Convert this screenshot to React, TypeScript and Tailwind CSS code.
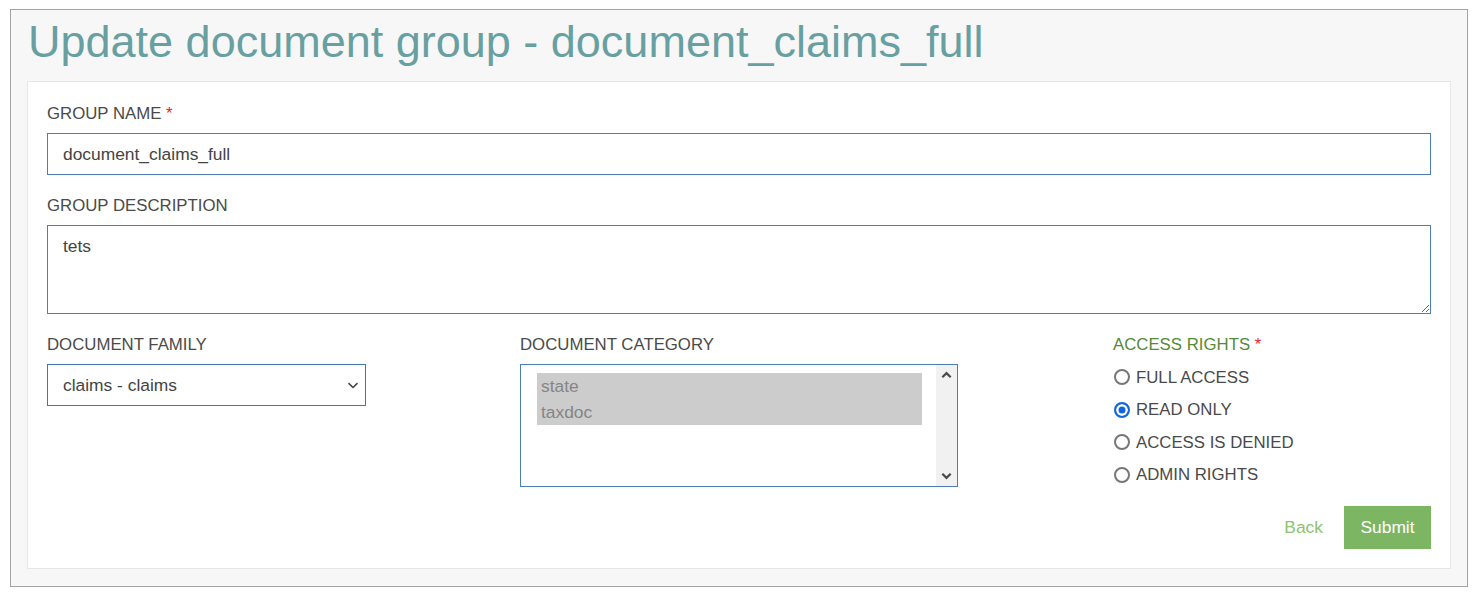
import React, { useState } from "react";

const font = { fontFamily: '"Liberation Sans", Arial, sans-serif' };

const rights = ["FULL ACCESS", "READ ONLY", "ACCESS IS DENIED", "ADMIN RIGHTS"];

function FieldLabel({
  children,
  required,
  className = "",
}: {
  children: React.ReactNode;
  required?: boolean;
  className?: string;
}) {
  return (
    <div className={`h-5 leading-5 text-[16.8px] ${className}`}>
      {children}
      {required && <span className="text-[#e2232a]"> *</span>}
    </div>
  );
}

export default function App() {
  const [name, setName] = useState("document_claims_full");
  const [desc, setDesc] = useState("tets");
  const [access, setAccess] = useState("READ ONLY");

  return (
    <div className="w-[1477px] h-[594px] bg-white pt-[9px] pl-[10px] pr-[9px]" style={font}>
      <div className="h-[578px] border border-[#a3a3a3] bg-[#f7f7f7] px-4 pt-[7px]">
        <h1 className="h-[50px] leading-[50px] text-[45px] text-[#68a0a2] pl-[1px]">
          Update document group - document_claims_full
        </h1>
        <div className="mt-[14px] h-[488px] border border-[#e6e6e6] bg-white px-[19px] pt-[22px] text-[#4a4a4a]">
          <FieldLabel required>GROUP NAME</FieldLabel>
          <input
            value={name}
            onChange={(e) => setName(e.target.value)}
            className="mt-[9px] block w-full h-[42px] border border-[#4a7fb0] px-[15px] text-[17.4px] text-[#444] outline-none"
            style={font}
          />

          <FieldLabel className="mt-[21px]">GROUP DESCRIPTION</FieldLabel>
          <textarea
            value={desc}
            onChange={(e) => setDesc(e.target.value)}
            className="mt-[9px] block w-full h-[89px] border border-[#4a7fb0] px-[15px] pt-[7px] text-[17.4px] text-[#444] outline-none"
            style={font}
          />

          <div className="mt-[21px] flex">
            <div className="w-[473px]">
              <FieldLabel>DOCUMENT FAMILY</FieldLabel>
              <div className="relative mt-[9px] w-[319px] h-[42px]">
                <select
                  defaultValue="claims"
                  className="appearance-none block w-full h-full border border-[#3f78ae] bg-white pl-[15px] text-[17.4px] text-[#444] outline-none"
                  style={font}
                >
                  <option value="claims">claims - claims</option>
                </select>
                <svg
                  className="absolute right-[7px] top-[18px] pointer-events-none"
                  width="12"
                  height="7"
                  viewBox="0 0 12 7"
                >
                  <path d="M1.5 1.2 6 5.5 10.5 1.2" fill="none" stroke="#444" strokeWidth="1.6" />
                </svg>
              </div>
            </div>

            <div className="w-[593px]">
              <FieldLabel>DOCUMENT CATEGORY</FieldLabel>
              <div className="mt-[9px] w-[438px] h-[123px] border border-[#4a7fb0] flex">
                <div className="flex-1 pl-[16px] pr-[14px] pt-[8px]">
                  <div className="bg-[#cccccc] text-[#858585] text-[17.4px] pl-[4px]">
                    <div className="h-[26px] leading-[26px]">state</div>
                    <div className="h-[26px] leading-[26px]">taxdoc</div>
                  </div>
                </div>
                <div className="w-[21px] bg-[#f1f1f1] flex flex-col justify-between items-center py-[6px]">
                  <svg width="11" height="8" viewBox="0 0 11 8">
                    <path d="M1.3 6.3 5.5 2.1 9.7 6.3" fill="none" stroke="#4a4a4a" strokeWidth="2.2" />
                  </svg>
                  <svg width="11" height="8" viewBox="0 0 11 8">
                    <path d="M1.3 1.7 5.5 5.9 9.7 1.7" fill="none" stroke="#4a4a4a" strokeWidth="2.2" />
                  </svg>
                </div>
              </div>
            </div>

            <div className="flex-1">
              <FieldLabel required className="text-[#558a38]">
                ACCESS RIGHTS
              </FieldLabel>
              <div className="mt-[6px]">
                {rights.map((r) => (
                  <label key={r} className="flex items-center h-[32.5px] text-[16.8px] cursor-pointer">
                    <input
                      type="radio"
                      name="access"
                      checked={access === r}
                      onChange={() => setAccess(r)}
                      className="appearance-none m-0 ml-[1px] mr-[6px] w-[16px] h-[16px] rounded-full border-2 border-[#777777] bg-white checked:border-[#1166e0] checked:bg-[#1166e0] checked:shadow-[inset_0_0_0_2.5px_white]"
                    />
                    {r}
                  </label>
                ))}
              </div>
            </div>
          </div>

          <div className="mt-[15px] flex justify-end items-center">
            <a href="#" className="text-[17.4px] text-[#8cc46f] mr-[21px]">
              Back
            </a>
            <button className="w-[87px] h-[43px] bg-[#7db662] text-white text-[17.4px]" style={font}>
              Submit
            </button>
          </div>
        </div>
      </div>
    </div>
  );
}
